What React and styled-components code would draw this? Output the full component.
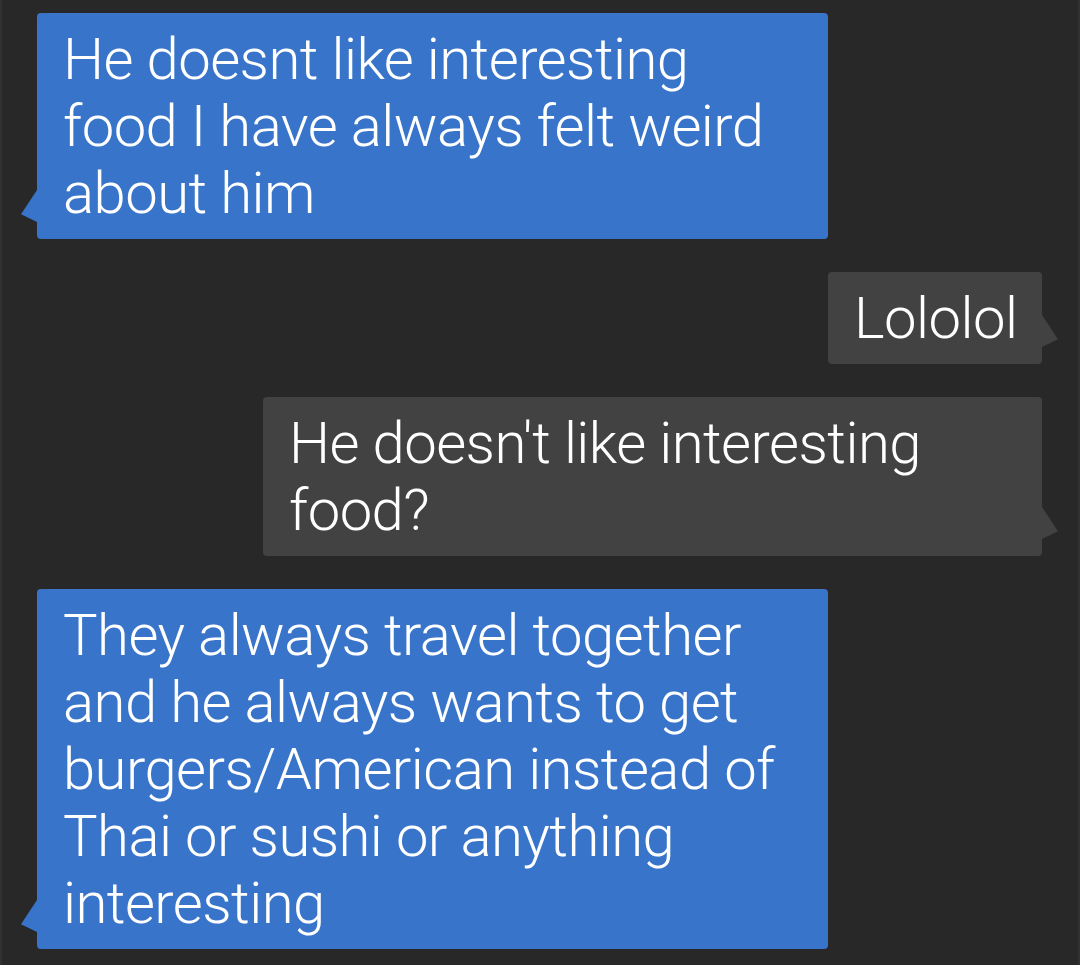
import React from 'react';
import styled, { createGlobalStyle } from 'styled-components';

const GlobalStyle = createGlobalStyle`
  html, body {
    margin: 0;
    padding: 0;
    background-color: #282828;
  }
`;

const Page = styled.div`
  box-sizing: border-box;
  min-height: 100vh;
  display: flex;
  flex-direction: column;
  gap: 33px;
  padding: 13px 38px 17px 37px;
  background-color: #282828;
  border-left: 2px solid #313131;
  border-right: 2px solid #313131;
  font-family: Roboto, "Liberation Sans", sans-serif;
  font-weight: 300;
`;

const Bubble = styled.div`
  position: relative;
  box-sizing: border-box;
  width: ${(props) => props.width}px;
  align-self: ${(props) => (props.mine ? 'flex-end' : 'flex-start')};
  margin-left: ${(props) => (props.mine ? '0' : '-2px')};
  margin-right: ${(props) => (props.mine ? '-2px' : '0')};
  padding: 13px 26px 12px 26px;
  background-color: ${(props) => (props.mine ? '#424242' : '#3874c9')};
  border-radius: 4px;
  color: #ffffff;
  font-size: 58px;
  line-height: 67px;
  letter-spacing: -0.55px;

  &::after {
    content: '';
    position: absolute;
    bottom: 17px;
    width: 16px;
    height: 32px;
    background-color: inherit;
    ${(props) => (props.mine
    ? 'right: -16px; clip-path: polygon(0 0, 100% 76%, 0 100%);'
    : 'left: -16px; clip-path: polygon(100% 0, 0 76%, 100% 100%);')}
  }
`;

const messages = [
  { id: 1, mine: false, width: 791, text: 'He doesnt like interesting food I have always felt weird about him' },
  { id: 2, mine: true, width: 214, text: 'Lololol' },
  { id: 3, mine: true, width: 779, text: "He doesn't like interesting food?" },
  { id: 4, mine: false, width: 791, text: 'They always travel together and he always wants to get burgers/American instead of Thai or sushi or anything interesting' },
];

function App() {
  return (
    <>
      <GlobalStyle />
      <Page>
        {messages.map((m) => (
          <Bubble key={m.id} mine={m.mine} width={m.width}>
            {m.text}
          </Bubble>
        ))}
      </Page>
    </>
  );
}

export default App;
